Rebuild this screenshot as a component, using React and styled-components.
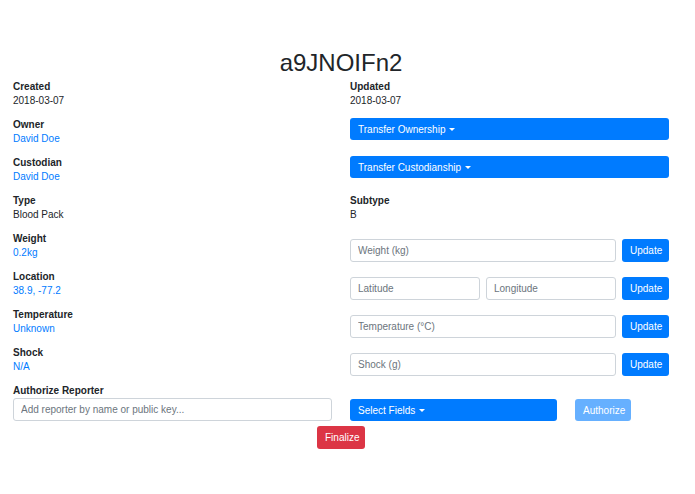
import React from "react";
import styled, { createGlobalStyle } from "styled-components";

const Global = createGlobalStyle`
  body { margin: 0; font-family: "Liberation Sans", Arial, sans-serif; color: #212529; background: #fff; }
`;
const Page = styled.div`
  width: 656px; padding: 48px 0 0 13px;
`;
const Title = styled.h1`
  margin: 0 0 3px; font-weight: 400; font-size: 24px; line-height: 29px; text-align: center; padding-left: 0;
`;
const Grid = styled.div`
  display: grid; grid-template-columns: 319px 319px; column-gap: 18px; grid-auto-rows: 38px;
`;
const Cell = styled.div`
  display: flex; flex-direction: column;
`;
const Label = styled.div`
  font-size: 10px; font-weight: 700; line-height: 14px;
`;
const Value = styled.div`
  font-size: 10px; line-height: 14px; color: ${p => (p.$link ? "#007bff" : "#212529")};
`;
const Btn = styled.button`
  font-family: inherit; font-size: 10px; color: #fff; border: none; border-radius: 3px;
  background: ${p => p.$bg || "#007bff"}; height: ${p => p.$h || 23}px; padding: 0 8px;
  text-align: ${p => (p.$left ? "left" : "center")}; cursor: pointer;
  ${p => p.$w && `width: ${p.$w}px;`}
`;
const Caret = styled.span`
  display: inline-block; margin-left: 4px; vertical-align: 2px;
  border-top: 3px solid #fff; border-left: 3px solid transparent; border-right: 3px solid transparent;
`;
const Row = styled.div`
  display: flex; gap: 6px; align-items: center; margin-top: -1px;
`;
const Input = styled.input`
  flex: 1; min-width: 0; height: 23px; box-sizing: border-box; border: 1px solid #ced4da; border-radius: 3px;
  font-family: inherit; font-size: 10px; padding: 0 7px; color: #495057;
  &::placeholder { color: #6c757d; }
`;
const Bottom = styled.div`
  display: grid; grid-template-columns: 319px 319px; column-gap: 18px; margin-top: 0;
`;
const BottomRight = styled.div`
  display: flex; gap: 18px; align-items: flex-end;
`;
const Center = styled.div`
  display: flex; justify-content: center; margin-top: 5px;
`;

const Field = ({ l, v, link }) => (
  <Cell><Label>{l}</Label><Value $link={link}>{v}</Value></Cell>
);
const InputRow = ({ ph }) => (
  <Row>{ph.map(p => <Input key={p} placeholder={p} />)}<Btn $w={47}>Update</Btn></Row>
);

export default function App() {
  return (
    <Page>
      <Global />
      <Title>a9JNOIFn2</Title>
      <Grid>
        <Field l="Created" v="2018-03-07" />
        <Field l="Updated" v="2018-03-07" />
        <Field l="Owner" v="David Doe" link />
        <Cell><Btn $h={22} $left>Transfer Ownership<Caret /></Btn></Cell>
        <Field l="Custodian" v="David Doe" link />
        <Cell><Btn $h={22} $left>Transfer Custodianship<Caret /></Btn></Cell>
        <Field l="Type" v="Blood Pack" />
        <Field l="Subtype" v="B" />
        <Field l="Weight" v="0.2kg" link />
        <InputRow ph={["Weight (kg)"]} />
        <Field l="Location" v="38.9, -77.2" link />
        <InputRow ph={["Latitude", "Longitude"]} />
        <Field l="Temperature" v="Unknown" link />
        <InputRow ph={["Temperature (°C)"]} />
        <Field l="Shock" v="N/A" link />
        <InputRow ph={["Shock (g)"]} />
      </Grid>
      <Bottom>
        <Cell>
          <Label>Authorize Reporter</Label>
          <Row style={{ marginTop: 0 }}><Input placeholder="Add reporter by name or public key..." /></Row>
        </Cell>
        <BottomRight>
          <Btn $w={207} $h={22} $left>Select Fields<Caret /></Btn>
          <Btn $w={56} $h={22} $bg="#66b0ff">Authorize</Btn>
        </BottomRight>
      </Bottom>
      <Center><Btn $w={48} $bg="#dc3545">Finalize</Btn></Center>
    </Page>
  );
}
